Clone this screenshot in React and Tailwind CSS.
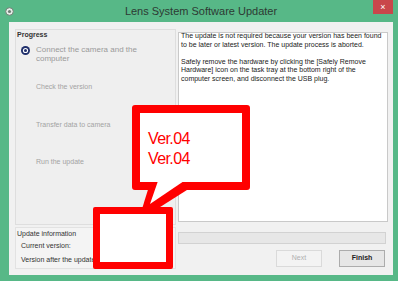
const steps = [
  { lines: ['Connect the camera and the', 'computer'], active: true },
  { lines: ['Check the version'] },
  { lines: ['Transfer data to camera'] },
  { lines: ['Run the update'] },
]

const message = [
  ['The update is not required because your version has been found', 'to be later or latest version. The update process is aborted.'],
  ['Safely remove the hardware by clicking the [Safely Remove', 'Hardware] icon on the task tray at the bottom right of the', 'computer screen, and disconnect the USB plug.'],
]

function Bullet() {
  return (
    <svg width="9" height="9" viewBox="0 0 9 9" className="shrink-0">
      <circle cx="4.5" cy="4.5" r="4.5" fill="#1f2f6b" />
      <circle cx="4.5" cy="4.5" r="2.6" fill="#ffffff" />
      <circle cx="4.5" cy="4.5" r="1.5" fill="#1f2f6b" />
    </svg>
  )
}

export default function App() {
  return (
    <div className="relative w-[398px] h-[281px] overflow-hidden bg-[#57b887] flex flex-col font-['Liberation_Sans',Arial,sans-serif]">
      {/* title bar */}
      <div className="h-[22px] flex items-start shrink-0">
        <div className="w-[25px] h-full flex items-center pl-[5px]">
          <svg width="9" height="9" viewBox="0 0 9 9">
            <circle cx="4.5" cy="4.5" r="3.8" fill="#e8efe9" stroke="#6f7f75" strokeWidth="1" />
            <circle cx="4.5" cy="4.5" r="1.6" fill="#6f7f75" />
          </svg>
        </div>
        <div className="flex-1 h-full flex items-center justify-center text-[11px] text-[#2d3a33] pl-[4px]">
          Lens System Software Updater
        </div>
        <div className="w-[25px] h-full pr-[5px]">
          <div className="w-[20px] h-[14px] bg-[#c9474b] flex items-center justify-center text-white text-[9px] leading-none">
            ×
          </div>
        </div>
      </div>

      {/* body */}
      <div className="ml-[9px] mr-[5px] h-[253px] bg-[#f1f1f1] flex pl-[6px] pr-[4px]">
        {/* left column */}
        <div className="w-[161px] flex flex-col pt-[7px] pb-[6px] gap-[2px]">
          <div className="h-[196px] border border-[#dedede] bg-[#efefef] pl-[1px]">
            <div className="text-[7px] leading-[9px] text-[#333] font-semibold">Progress</div>
            <div className="pt-[6px]">
              {steps.map((s, i) => (
                <div key={i} className={i === 1 ? 'h-[38px] flex items-start' : 'h-[37px] flex items-start'}>
                  <div className="w-[19px] pl-[4px] pt-[0.5px] flex">{s.active && <Bullet />}</div>
                  <div className={s.active ? 'text-[8px] leading-[9px] text-[#9a9a9a]' : 'text-[7px] leading-[9px] text-[#a3a3a3]'}>
                    {s.lines.map((l) => (
                      <div key={l}>{l}</div>
                    ))}
                  </div>
                </div>
              ))}
            </div>
          </div>
          <div className="flex-1 border border-[#e2e2e2] bg-[#f4f4f4] pl-[1px] pt-[1px] overflow-hidden">
            <div className="text-[7px] leading-[10px] text-[#333]">Update information</div>
            <div className="pl-[4px] text-[7px] leading-[14px] text-[#333]">
              <div>Current version:</div>
              <div>Version after the update:</div>
            </div>
          </div>
        </div>

        {/* right column */}
        <div className="flex-1 flex flex-col pl-[2px] pt-[10px] pb-[7px]">
          <div className="h-[190px] w-[210px] border border-[#c9c9c9] bg-white pl-[2px] text-[7px] leading-[8.5px] text-[#222] whitespace-nowrap overflow-hidden">
            {message.map((para, i) => (
              <div key={i} className={i === 0 ? '-mt-[1px]' : 'mt-[8.5px]'}>
                {para.map((l) => (
                  <div key={l}>{l}</div>
                ))}
              </div>
            ))}
          </div>
          <div className="mt-[10px] h-[12px] w-[208px] border border-[#d2d2d2] bg-[#e7e7e7]"></div>
          <div className="mt-[6px] flex justify-end gap-[17px] pr-[4px]">
            <div className="w-[46px] h-[17px] border border-[#dadada] bg-[#f3f3f3] flex items-center justify-center text-[7px] text-[#b0b0b0]">
              Next
            </div>
            <div className="w-[46px] h-[17px] border border-[#acacac] bg-[#e6e6e6] flex items-center justify-center text-[7px] text-[#222] font-semibold">
              Finish
            </div>
          </div>
        </div>
      </div>

      {/* callout overlay */}
      <div className="absolute left-[132px] top-[105px] w-[118px] h-[85px] border-[8px] border-[#ff0000] bg-white rounded-[3px] pl-[8px] pt-[16px]">
        <div className="text-[16px] leading-[20px] tracking-[-0.6px] text-[#ff0000]">Ver.04</div>
        <div className="text-[16px] leading-[20px] tracking-[-0.6px] text-[#ff0000]">Ver.04</div>
      </div>
      <div className="absolute left-[93px] top-[207px] w-[80px] h-[62px] border-[7px] border-[#ff0000] bg-white rounded-[2px]"></div>
      <svg className="absolute left-0 top-0 pointer-events-none" width="398" height="281" viewBox="0 0 398 281">
        <polygon points="150,183 198,183 157,209 142,209" fill="#ff0000" />
        <polygon points="158,181 184,181 150,204" fill="#ffffff" />
      </svg>
    </div>
  )
}
